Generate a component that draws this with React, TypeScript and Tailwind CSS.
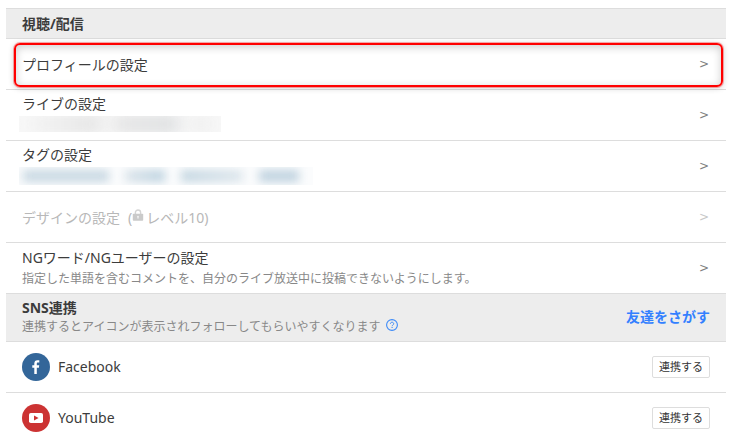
import type { ReactNode } from 'react';

const fontClass = "font-['Noto_Sans','Noto_Sans_CJK_JP',sans-serif]";

function Chevron({ muted = false }: { muted?: boolean }) {
    return (
        <span
            className={`font-['DejaVu_Sans',sans-serif] text-xs ${muted ? 'text-[#c8c8c8]' : 'text-[#808080]'}`}
            aria-hidden="true"
        >
            &gt;
        </span>
    );
}

function LockIcon() {
    return (
        <svg className="-mt-2 mr-0.5 inline-block h-3 w-3" viewBox="0 0 12 12" aria-hidden="true">
            <path d="M3.4 5.5V3.6a2.6 2.6 0 0 1 5.2 0v1.9" fill="none" stroke="#d4d4d4" strokeWidth="1.4" />
            <rect x="0.8" y="4.8" width="10.4" height="7" rx="0.8" fill="#cacaca" />
            <circle cx="6" cy="7.7" r="0.9" fill="#f4f4f4" />
            <rect x="5.6" y="8" width="0.8" height="1.8" fill="#f4f4f4" />
        </svg>
    );
}

function HelpIcon() {
    return (
        <svg className="h-3 w-3" viewBox="0 0 12 12" fill="none" stroke="#3d8bf8" aria-hidden="true">
            <circle cx="6" cy="6" r="5.4" strokeWidth="1.1" />
            <path d="M4.4 4.8c0-2.1 3.3-2.1 3.3 0 0 1.2-1.6 1.2-1.6 2.4" strokeWidth="1" />
            <path d="M6.1 8v1.1" strokeWidth="1.1" />
        </svg>
    );
}

function FacebookIcon() {
    return (
        <svg className="h-7 w-7" viewBox="0 0 28 28" aria-hidden="true">
            <circle cx="14" cy="14" r="14" fill="#336699" />
            <path
                d="M12.3 21v-6.2h-2v-2.5h2v-1.8c0-2.1 1.2-3.3 3.1-3.3.9 0 1.7.1 1.9.1v2.3H16c-1 0-1.2.5-1.2 1.2v1.5h2.4l-.3 2.5h-2.1V21z"
                fill="#fff"
            />
        </svg>
    );
}

function YouTubeIcon() {
    return (
        <svg className="h-7 w-7" viewBox="0 0 28 28" aria-hidden="true">
            <circle cx="14" cy="14" r="14" fill="#cc3333" />
            <rect x="7" y="9" width="14" height="10" rx="1.8" fill="#fff" />
            <path d="M12 11.4v5.2l4.6-2.6z" fill="#cc3333" />
        </svg>
    );
}

function HiddenLiveInfo() {
    return (
        <div className="-ml-[3px] mt-0.5 h-4 w-[202px] overflow-hidden bg-[#f8f8f8]">
            <div className="flex h-full items-center gap-3 pl-3 blur-[8px]">
                <span className="h-4 w-[70px] bg-linear-to-r from-[#f2f2f2] to-[#dedede]" />
                <span className="h-4 w-[66px] bg-linear-to-r from-[#e2e2e2] to-[#d8dadc]" />
                <span className="h-4 w-5 bg-[#eeeeee]" />
            </div>
        </div>
    );
}

function HiddenTags() {
    return (
        <div className="-ml-[3px] mt-0.5 h-[18px] w-[294px] overflow-hidden bg-[#fbfcfd]">
            <div className="flex h-full items-center gap-4 px-1 blur-[5px]">
                <span className="h-3 w-[86px] bg-[#c8d8e2]" />
                <span className="h-3 w-10 bg-linear-to-r from-[#dbe4ea] to-[#b9d0de]" />
                <span className="h-3 w-[62px] bg-linear-to-r from-[#c2d5e0] to-[#dde6ec]" />
                <span className="h-3 w-10 bg-[#bfd2df]" />
            </div>
        </div>
    );
}

interface SettingRowProps {
    title: ReactNode;
    detail?: ReactNode;
    disabled?: boolean;
    highlighted?: boolean;
}

function SettingRow({ title, detail, disabled = false, highlighted = false }: SettingRowProps) {
    return (
        <li className="relative border-b border-[#dddddd]">
            <button
                type="button"
                disabled={disabled}
                className="flex h-[50px] w-full items-center justify-between pl-4 pr-[17px] text-left"
            >
                <span className={`block text-sm leading-[21px] ${disabled ? 'text-[#b8b8b8]' : 'text-[#3c3c3c]'}`}>
                    {title}
                    {detail && <span className="block h-[21px] text-xs leading-[21px] text-[#888888]">{detail}</span>}
                </span>
                <Chevron muted={disabled} />
            </button>
            {highlighted && (
                <div className="pointer-events-none absolute bottom-0.5 left-2 right-[3px] top-1 z-10 rounded-md border-2 border-[#ff0000] shadow-[0_0_0_1px_rgba(255,0,0,0.3),0_1px_6px_rgba(0,0,0,0.2),inset_0_2px_8px_rgba(0,0,0,0.2)]" />
            )}
        </li>
    );
}

function SnsRow({ name, icon, last = false }: { name: string; icon: ReactNode; last?: boolean }) {
    return (
        <li
            className={`flex items-center justify-between pl-4 pr-4 pt-[11px] ${last ? 'pb-1' : 'border-b border-[#dddddd] pb-[11px]'}`}
        >
            <div className="flex items-center gap-2 text-sm text-[#3c3c3c]">
                {icon}
                <span>{name}</span>
            </div>
            <button
                type="button"
                aria-label={`${name}を連携する`}
                className="h-[22px] rounded-xs border border-[#dddddd] bg-white px-1.5 text-[11px] leading-5 text-[#333333]"
            >
                連携する
            </button>
        </li>
    );
}

export default function App() {
    return (
        <main className={`min-h-screen bg-white px-1.5 pt-2 ${fontClass}`} lang="ja">
            <section>
                <h2 className="border-y border-[#dddddd] bg-[#ededed] px-4 py-1 text-sm leading-[21px] font-bold text-[#3c3c3c]">
                    視聴/配信
                </h2>
                <ul>
                    <SettingRow title="プロフィールの設定" highlighted />
                    <SettingRow title="ライブの設定" detail={<HiddenLiveInfo />} />
                    <SettingRow title="タグの設定" detail={<HiddenTags />} />
                    <SettingRow
                        title={
                            <>
                                デザインの設定
                                <span className="ml-2">
                                    (<LockIcon />
                                    レベル10)
                                </span>
                            </>
                        }
                        disabled
                    />
                    <SettingRow
                        title="NGワード/NGユーザーの設定"
                        detail="指定した単語を含むコメントを、自分のライブ放送中に投稿できないようにします。"
                    />
                </ul>
            </section>
            <section>
                <div className="flex items-center justify-between border-b border-[#dddddd] bg-[#ededed] px-4 pt-1 pb-[5px]">
                    <div>
                        <h2 className="text-sm leading-5 font-bold text-[#3c3c3c]">SNS連携</h2>
                        <div className="flex gap-1.5 text-xs leading-[18px] text-[#888888]">
                            <p>連携するとアイコンが表示されフォローしてもらいやすくなります</p>
                            <button type="button" aria-label="ヘルプ" className="mt-px h-3">
                                <HelpIcon />
                            </button>
                        </div>
                    </div>
                    <a href="#friends" className="text-sm font-bold text-[#3380ff]">
                        友達をさがす
                    </a>
                </div>
                <ul>
                    <SnsRow name="Facebook" icon={<FacebookIcon />} />
                    <SnsRow name="YouTube" icon={<YouTubeIcon />} last />
                </ul>
            </section>
        </main>
    );
}
